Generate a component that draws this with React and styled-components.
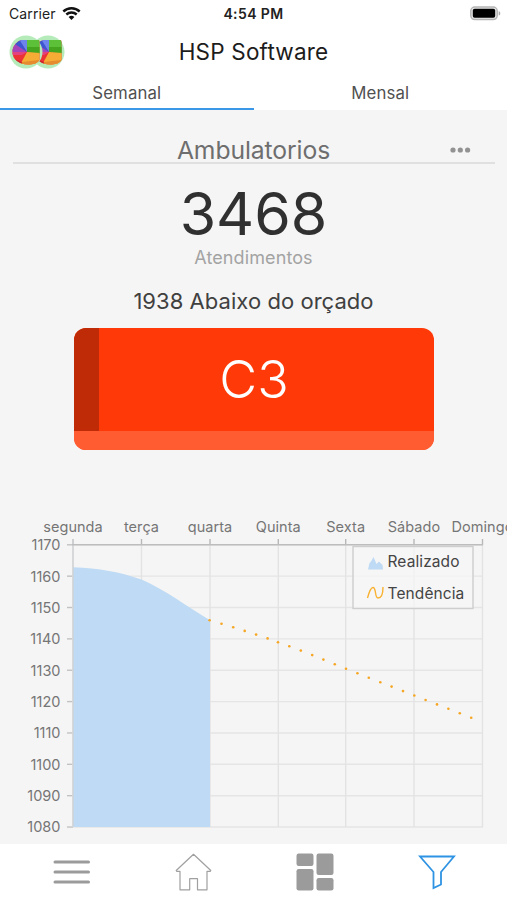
import React from 'react';
import styled, { createGlobalStyle } from 'styled-components';

const GlobalStyle = createGlobalStyle`
  * {
    box-sizing: border-box;
  }

  body {
    margin: 0;
    background: #f5f5f5;
    font-family: Inter, 'Liberation Sans', sans-serif;
  }
`;

const Screen = styled.div`
  display: flex;
  flex-direction: column;
  width: 100%;
  height: 900px;
  overflow: hidden;
  background: #f5f5f5;
`;

const StatusBar = styled.div`
  display: grid;
  grid-template-columns: 1fr auto 1fr;
  align-items: center;
  height: 28px;
  padding: 0 6px 0 9px;
  background: white;
  color: #222;
  font-size: 14px;
`;

const Carrier = styled.span`
  display: flex;
  align-items: center;
  gap: 6px;
  margin-top: -2px;
  letter-spacing: 0.1px;
`;

const Clock = styled.span`
  margin: -1px 3px 0 0;
  font-weight: 600;
  letter-spacing: 0.4px;
`;

const Battery = styled.svg`
  justify-self: end;
  margin-top: -2px;
`;

const Header = styled.header`
  display: grid;
  grid-template-columns: 60px 1fr 60px;
  align-items: center;
  height: 48px;
  padding: 0 8px;
  background: white;
`;

const AppTitle = styled.h1`
  margin: -2px 0 0;
  color: #1c1c1c;
  font-size: 22.5px;
  font-weight: 400;
  letter-spacing: 0.2px;
  text-align: center;
`;

const Tabs = styled.nav`
  display: flex;
  height: 34px;
  background: white;
`;

const Tab = styled.button`
  flex: 1;
  padding: 1px 0 0;
  border: 0;
  border-bottom: 2px solid ${({ $active }) => ($active ? '#3b97e8' : 'white')};
  background: transparent;
  color: #505050;
  font-family: inherit;
  font-size: 16.8px;
  letter-spacing: 0.1px;
`;

const Panel = styled.main`
  display: flex;
  flex: 1;
  flex-direction: column;
  align-items: center;
`;

const PanelHeader = styled.div`
  display: grid;
  grid-template-columns: 60px 1fr 60px;
  align-items: center;
  width: 482px;
  height: 30px;
  margin-top: 24px;
  padding-top: 2px;
  border-bottom: 2px solid #e0e0e0;
`;

const PanelTitle = styled.h2`
  grid-column: 2;
  margin: 0;
  color: #6e6e6e;
  font-size: 24.7px;
  font-weight: 400;
  letter-spacing: -0.1px;
  line-height: 28px;
  text-align: center;
`;

const Total = styled.div`
  height: 76px;
  margin-top: 12px;
  color: #303030;
  font-size: 59px;
  letter-spacing: 0;
  line-height: 76px;
`;

const TotalLabel = styled.div`
  color: #a3a3a3;
  font-size: 18px;
  letter-spacing: 0.1px;
  line-height: 24px;
  margin-top: -6px;
`;

const Budget = styled.div`
  margin-top: 17px;
  color: #404040;
  font-size: 22px;
  letter-spacing: 0.05px;
  line-height: 28px;
`;

const Card = styled.div`
  display: grid;
  grid-template-columns: 25px 1fr 25px;
  grid-template-rows: 102.5px 19.5px;
  width: 360px;
  margin-top: 13px;
  border-radius: 12px;
  overflow: hidden;
  background: #ff3a08;
`;

const CardSide = styled.div`
  background: #bf2b06;
`;

const CardBase = styled.div`
  grid-column: 1 / -1;
  grid-row: 2;
  background: #ff5c32;
`;

const CardText = styled.div`
  padding-left: 1px;
  color: white;
  font-size: 52px;
  font-weight: 300;
  letter-spacing: 0;
  line-height: 103px;
  text-align: center;
`;

const Chart = styled.svg`
  display: block;
  width: 507px;
  height: 334px;
  margin-top: auto;
  font-family: Inter, 'Liberation Sans', sans-serif;
`;

const AxisText = styled.text`
  fill: #757575;
  font-size: 14.5px;
  letter-spacing: ${({ $spacing }) => $spacing || 0}px;
  text-anchor: ${({ $anchor }) => $anchor || 'middle'};
`;

const LegendText = styled.text`
  fill: #444;
  font-size: 15.5px;
  letter-spacing: 0.1px;
`;

const TabBar = styled.footer`
  display: flex;
  justify-content: space-around;
  align-items: center;
  height: 56px;
  padding: 0 9px 0 11px;
  background: white;
`;

const TabBarButton = styled.button`
  display: flex;
  justify-content: center;
  width: 44px;
  padding: 0;
  border: 0;
  background: transparent;
`;

const days = [
  { label: 'segunda', x: 73 },
  { label: 'terça', x: 141.5 },
  { label: 'quarta', x: 210 },
  { label: 'Quinta', x: 278.3 },
  { label: 'Sexta', x: 345.7 },
  { label: 'Sábado', x: 414 },
  { label: 'Domingo', x: 482.5 },
];

const values = [1170, 1160, 1150, 1140, 1130, 1120, 1110, 1100, 1090, 1080];

const toY = (value) => 34.8 + (1170 - value) * 3.136;

const trend = [
  [209.6, 110.2], [221.5, 113.7], [233.2, 117.3], [244.7, 120.9],
  [256.1, 124.6], [267.6, 128.4], [278, 132.2], [289.3, 136.2],
  [300.8, 140.6], [312.2, 145.1], [323.4, 149.6], [334.8, 154.2],
  [346, 158.7], [357.4, 163.2], [368.8, 167.7], [380.3, 172.2],
  [391.6, 176.6], [403, 181.1], [414.3, 185.5], [425.6, 190],
  [437, 194.4], [448.4, 198.8], [459.8, 203.3], [471.2, 207.7],
];

// One sphere of the logo, cut into coloured slices
const Pie = ({ x }) => (
  <g transform={`translate(${x} 17)`}>
    <circle r="16.5" fill="#b4ebb9" />
    <g clipPath="url(#pie)">
      <rect x="-14" y="-13" width="28" height="26" fill="#ed3235" />
      <path d="M1 0L-8 -13H3Z" fill="#6d84ec" />
      <path d="M1 0V-13H15V1Z" fill="#5cc038" />
      <path d="M1 0V-5L15 -5V2Z" fill="#46a51e" />
      <path d="M1 0L15 1V13H-6Z" fill="#f7ac35" />
      <path d="M1 0L-14 0V-7L-10 -9Z" fill="#a543b8" />
      <path d="M1 0L-11 -8L-7 -13Z" fill="#3c55d1" />
      <path d="M-14 0L1 0L-4 3L-14 3Z" fill="#e3427e" />
      <path d="M-4 10L13 8V13H-5Z" fill="#e58b30" />
      <path d="M-14 6L-4 10L-5 13H-14Z" fill="#c9252b" />
    </g>
  </g>
);

const Logo = () => (
  <svg width="58" height="34" viewBox="0 0 58 34">
    <defs>
      <clipPath id="pie">
        <path d="M-5 -12H12Q13.5 -12 13.5 -10V8Q11 12 4 12.5Q-4 13 -9 9Q-14 6 -13.5 -2Q-12 -9 -5 -12Z" />
      </clipPath>
    </defs>
    <Pie x={40} />
    <Pie x={18} />
  </svg>
);

const AttendanceChart = () => (
  <Chart viewBox="0 0 507 334">
    {values.map((value) => (
      <g key={value}>
        <path d={`M73 ${toY(value)}H483`} stroke="#e5e5e5" strokeWidth="1.4" />
        <path d={`M67 ${toY(value)}H73`} stroke="#c2c2c2" strokeWidth="1.4" />
        <AxisText x="60.5" y={toY(value) + 5.4} $anchor="end">{value}</AxisText>
      </g>
    ))}
    {days.map((day) => (
      <g key={day.label}>
        <path d={`M${day.x} 35V317`} stroke="#e3e3e3" strokeWidth="1.4" />
        <path d={`M${day.x} 29V35`} stroke="#b8b8b8" strokeWidth="1.4" />
        <AxisText x={day.x} y="21.7" $spacing={0.05}>{day.label}</AxisText>
      </g>
    ))}
    <path d="M73 57.2C99 58 120 62 141.5 69.5C164 79 189 98 210 110.2V317H73Z" fill="#bedaf4" />
    <path d="M73 29V317" stroke="#cfd2d5" strokeWidth="1.4" />
    <path d="M72 34.8H483" stroke="#bdbdbd" strokeWidth="1.6" />
    {trend.map(([x, y]) => (
      <circle key={x} cx={x} cy={y} r="1.3" fill="#f5a623" />
    ))}
    <rect x="353" y="36.5" width="120" height="62" fill="#f5f5f5" fillOpacity="0.75" stroke="#cecece" strokeWidth="1.4" />
    <path d="M368 59.5L369.5 53L371 51.5L373.5 47L376.5 54L379 51.5L382.5 55L383 59.5Z" fill="#bedaf4" />
    <path d="M367.5 88C369 82.5 370.5 77.5 373 77.5C376.5 77.5 374.5 88 378 88C382 88 383 83 383 77" fill="none" stroke="#f9b12f" strokeWidth="1.4" />
    <LegendText x="387.5" y="57.3">Realizado</LegendText>
    <LegendText x="387.5" y="88.7">Tendência</LegendText>
  </Chart>
);

const App = () => {
  return (
    <Screen>
      <GlobalStyle />
      <StatusBar>
        <Carrier>
          Carrier
          <svg width="19" height="15" viewBox="0 0 19 15">
            <path d="M1.3 5.5A12 12 0 0 1 17.7 5.5M4.3 8.5A7.8 7.8 0 0 1 14.7 8.5" fill="none" stroke="#111" strokeWidth="2.4" />
            <path d="M6.6 11A4.5 4.5 0 0 1 12.4 11L9.5 14Z" fill="#111" />
          </svg>
        </Carrier>
        <Clock>4:54 PM</Clock>
        <Battery width="31" height="15" viewBox="0 0 31 15">
          <rect x="0.8" y="1" width="26.4" height="12.6" rx="4" fill="#e8e8e8" stroke="#b5b5b5" strokeWidth="1.5" />
          <rect x="2.8" y="2.8" width="22.4" height="9" rx="1.8" fill="#000" />
          <path d="M28.7 5.2C30.8 5.8 30.8 9 28.7 9.6Z" fill="#aaa" />
        </Battery>
      </StatusBar>
      <Header>
        <Logo />
        <AppTitle>HSP Software</AppTitle>
      </Header>
      <Tabs>
        <Tab $active>Semanal</Tab>
        <Tab>Mensal</Tab>
      </Tabs>
      <Panel>
        <PanelHeader>
          <PanelTitle>Ambulatorios</PanelTitle>
          <svg width="60" height="8" viewBox="0 0 60 8" fill="#929292">
            <circle cx="18" cy="4" r="2.6" />
            <circle cx="25.3" cy="4" r="2.6" />
            <circle cx="32.6" cy="4" r="2.6" />
          </svg>
        </PanelHeader>
        <Total>3468</Total>
        <TotalLabel>Atendimentos</TotalLabel>
        <Budget>1938 Abaixo do orçado</Budget>
        <Card>
          <CardSide />
          <CardText>C3</CardText>
          <CardBase />
        </Card>
        <AttendanceChart />
      </Panel>
      <TabBar>
        <TabBarButton aria-label="Menu">
          <svg width="38" height="38" viewBox="0 0 38 38" stroke="#9b9b9b" strokeWidth="3" strokeLinecap="round">
            <path d="M2 9H35.5M2 19H35.5M2 29H35.5" />
          </svg>
        </TabBarButton>
        <TabBarButton aria-label="Home">
          <svg width="38" height="38" viewBox="0 0 38 38" fill="none" stroke="#a0a0a0" strokeWidth="1.2" strokeLinejoin="round">
            <path d="M18.5 1.3L35.8 17.5L35.2 18.3H32V36.8H22.5V25.7H14.7V36.8H5V18.3H1.8L1.2 17.5Z" />
          </svg>
        </TabBarButton>
        <TabBarButton aria-label="Dashboard">
          <svg width="38" height="38" viewBox="0 0 38 38" fill="#9b9b9b">
            <rect x="0.5" y="0.5" width="17" height="12.5" rx="2.2" />
            <rect x="20.5" y="0.5" width="17" height="21.5" rx="2.2" />
            <rect x="0.5" y="16" width="17" height="21.5" rx="2.2" />
            <rect x="20.5" y="25" width="17" height="12.5" rx="2.2" />
          </svg>
        </TabBarButton>
        <TabBarButton aria-label="Filter">
          <svg width="38" height="38" viewBox="0 0 38 38" fill="none" stroke="#2f93e3" strokeWidth="1.8">
            <path d="M2 3.5H36L23 19V31.5L15.5 35V19L2 3.5Z" />
          </svg>
        </TabBarButton>
      </TabBar>
    </Screen>
  );
};

export default App;
